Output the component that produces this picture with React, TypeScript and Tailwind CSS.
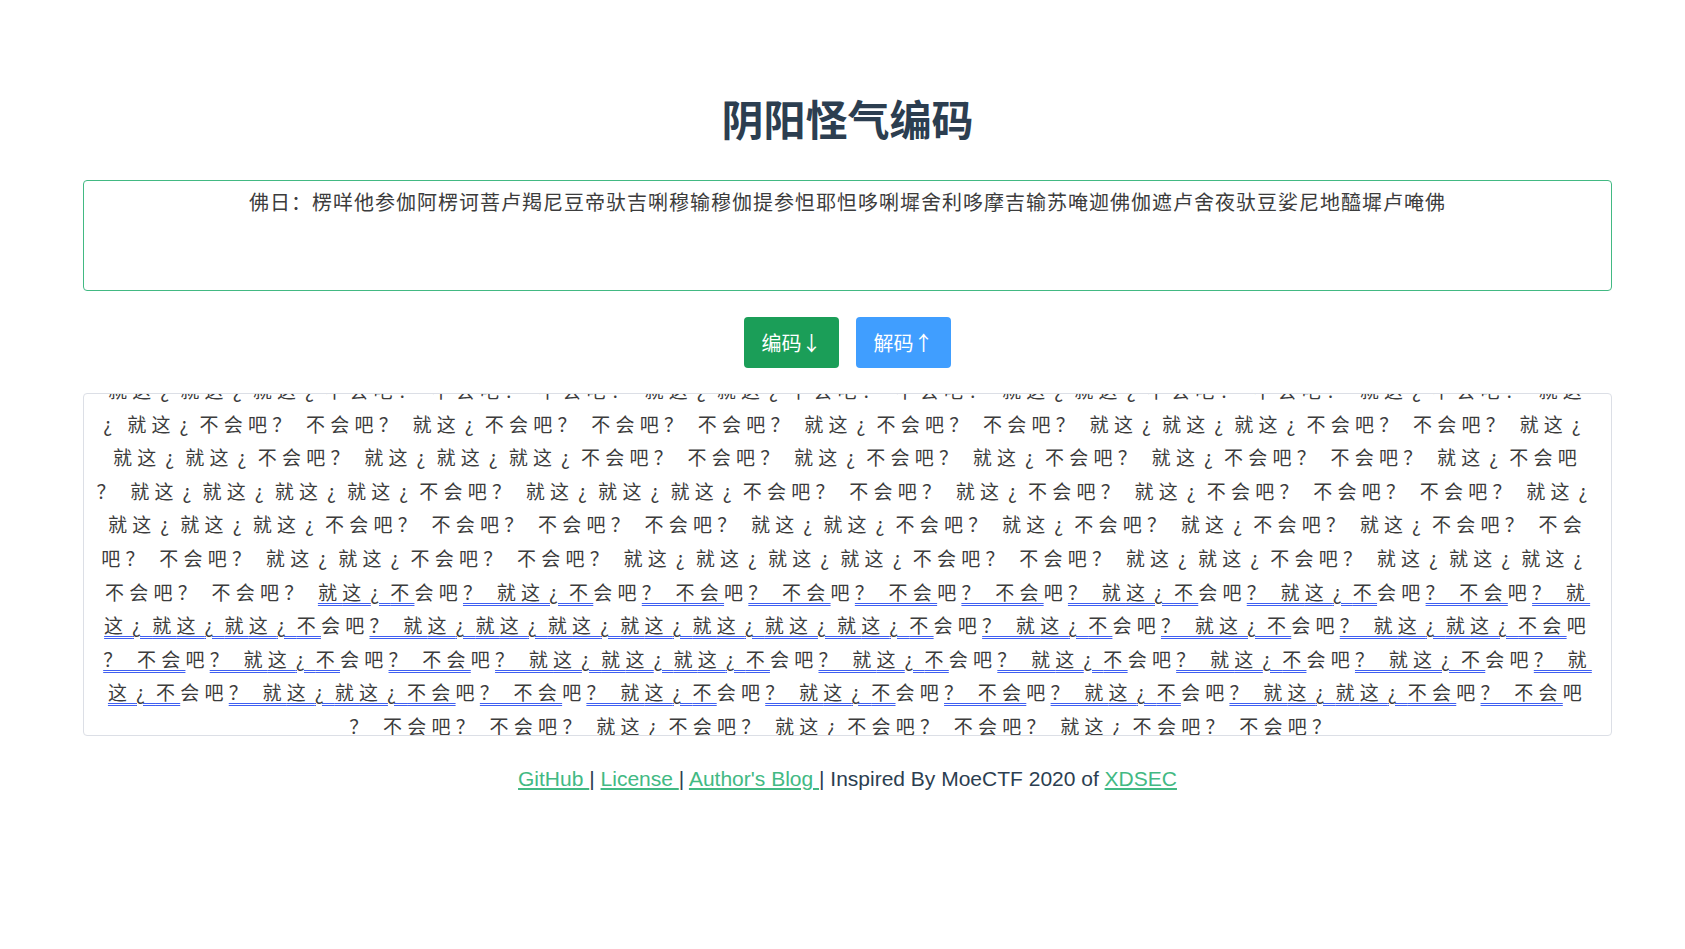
import React from 'react';

const INPUT_TEXT =
  '佛日：楞咩他参伽阿楞诃菩卢羯尼豆帝驮吉唎穆输穆伽提参怛耶怛哆唎墀舍利哆摩吉输苏唵迦佛伽遮卢舍夜驮豆娑尼地醯墀卢唵佛';

// text in {} is drawn with the blue double underline
const OUTPUT_LINES = [
  '就这¿就这¿就这¿不会吧？ 不会吧？ 不会吧？ 就这¿就这¿不会吧？ 不会吧？ 就这¿就这¿不会吧？ 不会吧？ 就这¿不会吧？ 就这',
  '¿就这¿不会吧？ 不会吧？ 就这¿不会吧？ 不会吧？ 不会吧？ 就这¿不会吧？ 不会吧？ 就这¿就这¿就这¿不会吧？ 不会吧？ 就这¿',
  '就这¿就这¿不会吧？ 就这¿就这¿就这¿不会吧？ 不会吧？ 就这¿不会吧？ 就这¿不会吧？ 就这¿不会吧？ 不会吧？ 就这¿不会吧',
  '？ 就这¿就这¿就这¿就这¿不会吧？ 就这¿就这¿就这¿不会吧？ 不会吧？ 就这¿不会吧？ 就这¿不会吧？ 不会吧？ 不会吧？ 就这¿',
  '就这¿就这¿就这¿不会吧？ 不会吧？ 不会吧？ 不会吧？ 就这¿就这¿不会吧？ 就这¿不会吧？ 就这¿不会吧？ 就这¿不会吧？ 不会',
  '吧？ 不会吧？ 就这¿就这¿不会吧？ 不会吧？ 就这¿就这¿就这¿就这¿不会吧？ 不会吧？ 就这¿就这¿不会吧？ 就这¿就这¿就这¿',
  '不会吧？ 不会吧？ {就这¿不}会吧{？ 就这¿不}会吧{？ 不会}吧{？ 不会}吧{？ 不会}吧{？ 不会}吧{？ 就这¿不}会吧{？ 就这¿不}会吧{？ 不会}吧{？ 就}',
  '{这¿就这¿就这¿不}会吧{？ 就这¿就这¿就这¿就这¿就这¿就这¿就这¿不}会吧{？ 就这¿不}会吧{？ 就这¿不}会吧{？ 就这¿就这¿不会}吧',
  '{？ 不会}吧{？ 就这¿不}会吧{？ 不会}吧{？ 就这¿就这¿就这¿不}会吧{？ 就这¿不}会吧{？ 就这¿不}会吧{？ 就这¿不}会吧{？ 就这¿不}会吧{？ 就}',
  '{这¿不}会吧{？ 就这¿就这¿不会}吧{？ 不会}吧{？ 就这¿不}会吧{？ 就这¿不}会吧{？ 不会}吧{？ 就这¿不}会吧{？ 就这¿就这¿不会}吧{？ 不会}吧',
  '{？ 不会}吧{？ 不会}吧{？ 就这¿不}会吧{？ 就这¿不}会吧{？ 不会}吧{？ 就这¿不}会吧{？ 不会}吧{？ }',
];

// the inverted question mark is narrow in this font, so it and the glyph
// before it get extra tracking to fill a full-width cell like the original
function Glyphs({ text }: { text: string }) {
  return (
    <>
      {text.split(/([^¿]?¿)/).map((part, i) => {
        if (part.length === 2 && part.endsWith('¿')) {
          return (
            <React.Fragment key={i}>
              <span className="tracking-[9px]">{part[0]}</span>
              <span className="tracking-[11px]">¿</span>
            </React.Fragment>
          );
        }
        if (part === '¿') {
          return (
            <span key={i} className="tracking-[15px]">
              ¿
            </span>
          );
        }
        return <React.Fragment key={i}>{part}</React.Fragment>;
      })}
    </>
  );
}

function OutputLine({ src }: { src: string }) {
  const segments = src.split(/(\{[^}]*\})/).filter((s) => s.length > 0);
  return (
    <div className="whitespace-pre text-center">
      {segments.map((seg, i) =>
        seg.startsWith('{') ? (
          <span
            key={i}
            className="underline decoration-double decoration-1 decoration-[#3f5ff2] underline-offset-[3px]"
          >
            <Glyphs text={seg.slice(1, -1)} />
          </span>
        ) : (
          <Glyphs key={i} text={seg} />
        )
      )}
    </div>
  );
}

export default function App() {
  return (
    <div className="min-h-screen w-full bg-white font-['Noto_Sans_CJK_SC',sans-serif]">
      <div className="ml-[83px] w-[1529px] pt-[88px]">
        <h1 className="text-center text-[42px] font-bold leading-[60px] text-[#2c3e50]">
          阴阳怪气编码
        </h1>

        <div className="mt-[32px] h-[111px] rounded-[4px] border border-[#42b983] px-[15px] pt-[6px]">
          <div className="text-center text-[20px] leading-[30px] tracking-[1px] text-[#3c3c3c]">
            {INPUT_TEXT}
          </div>
        </div>

        <div className="mt-[26px] flex justify-center gap-[17px]">
          <button className="h-[51px] w-[95px] rounded-[4px] bg-[#1b9e58] text-[20px] text-white">
            编码↓
          </button>
          <button className="h-[51px] w-[95px] rounded-[4px] bg-[#409eff] text-[20px] text-white">
            解码↑
          </button>
        </div>

        <div className="mt-[25px] h-[343px] overflow-hidden rounded-[4px] border border-[#dcdfe6]">
          <div className="-mt-[21px] px-[8px] text-[19px] leading-[33.6px] tracking-[5.25px] text-[#3c3c3c]">
            {OUTPUT_LINES.map((line, i) => (
              <OutputLine key={i} src={line} />
            ))}
          </div>
        </div>

        <div className="mt-[28px] text-center font-['Liberation_Sans',Arial,sans-serif] text-[21px] leading-[30px] text-[#2c3e50]">
          <a className="text-[#42b983] underline">GitHub </a>|{' '}
          <a className="text-[#42b983] underline">License </a>|{' '}
          <a className="text-[#42b983] underline">Author's Blog </a>| Inspired By MoeCTF 2020 of{' '}
          <a className="text-[#42b983] underline">XDSEC</a>
        </div>
      </div>
    </div>
  );
}
